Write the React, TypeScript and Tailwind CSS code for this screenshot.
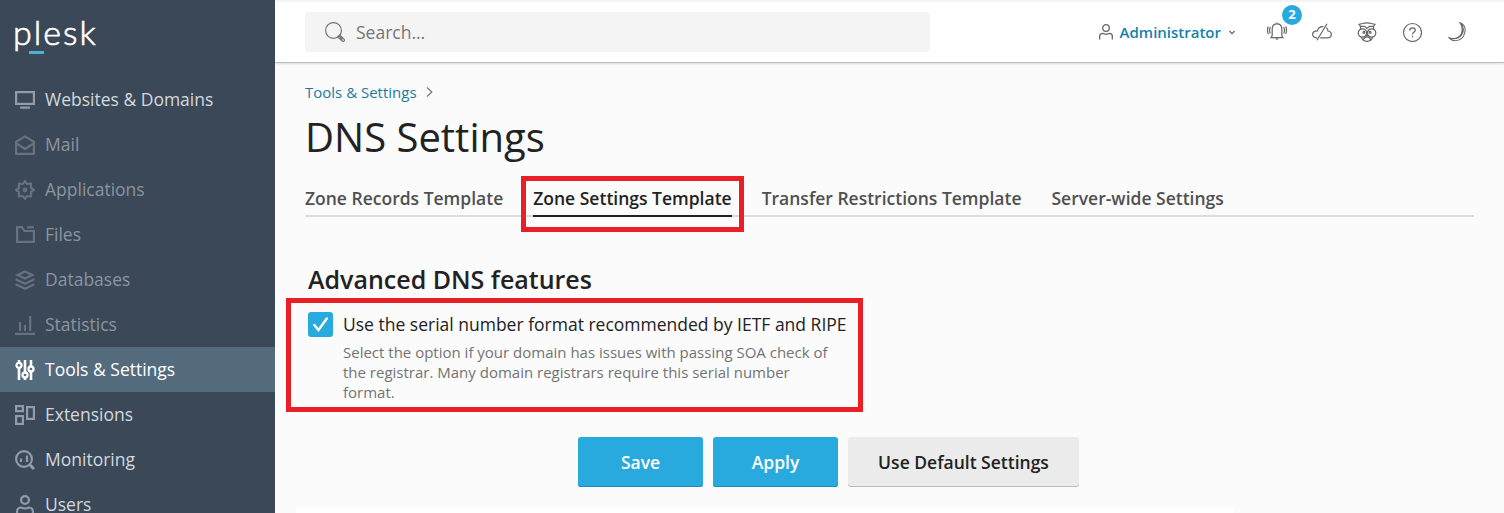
import React from "react";

type IconProps = { children: React.ReactNode; sw?: number; className?: string };

function Icon({ children, sw = 2, className = "size-5" }: IconProps) {
  return (
    <svg viewBox="0 0 20 20" fill="none" stroke="currentColor" strokeWidth={sw} className={className + " block shrink-0"}>
      {children}
    </svg>
  );
}

const icons: Record<string, React.ReactNode> = {
  web: (
    <>
      <rect x="1.100" y="2.100" width="17.800" height="11.800" />
      <path d="M6 17.700H14" strokeLinecap="round" />
    </>
  ),
  mail: (
    <>
      <path d="M1.100 6.800L10 1.400L18.900 6.800V18.900H1.100Z" strokeLinejoin="round" />
      <path d="M1.500 8.500L10 14L18.500 8.500" />
    </>
  ),
  apps: (
    <>
      <path
        strokeLinejoin="round"
        d="M10 1.100L12 4L16 3.500L16 8L18.900 10L16 12L16 16.500L12 16L10 18.900L8 16L4 16.500L4 12L1.100 10L4 8L4 3.500L8 4Z"
      />
      <circle cx="10" cy="10" r="1.300" />
    </>
  ),
  files: (
    <>
      <path d="M2.100 2.100H7L9.500 6H18.900V16.900H2.100Z" />
      <path d="M12 2.300H19" />
    </>
  ),
  db: (
    <>
      <path d="M2.500 5L10 1.400L17.500 5L10 8.600Z" />
      <path d="M.6 9.200L10 13.700L19.400 9.200M.6 14.200L10 18.700L19.400 14.200" />
    </>
  ),
  stats: <path d="M0 18.900H20M5 7V16M10 10V16M15.200 1V16" />,
  tools: (
    <g strokeWidth="2.300">
      <path d="M4 0V3M4 8V20M10 0V12M10 17V20M16 0V7M16 12V20" strokeWidth="2.600" />
      <circle cx="4" cy="5.300" r="2.500" />
      <circle cx="10" cy="15" r="2.500" />
      <circle cx="16" cy="9" r="2.500" />
    </g>
  ),
  ext: (
    <>
      <rect x="1.100" y="1.100" width="6.800" height="5" />
      <rect x="1.100" y="11.100" width="6.800" height="7.800" />
      <rect x="12.100" y="2.100" width="6.800" height="11.800" />
    </>
  ),
  mon: (
    <>
      <circle cx="9" cy="9" r="7.900" />
      <path d="M6 8.500V12M12 5.500V12" />
      <path d="M14.800 14.800L19 19" strokeWidth="3" />
    </>
  ),
  users: (
    <>
      <circle cx="10" cy="5" r="3.900" />
      <path d="M2.100 20V17Q2 12.500 6 12.500Q8 13.500 10 13.500Q12 13.500 14 12.500Q18 12.500 17.900 17V20" />
    </>
  ),
};

const nav = [
  { label: "Websites & Domains", icon: "web", state: "normal" },
  { label: "Mail", icon: "mail", state: "dim" },
  { label: "Applications", icon: "apps", state: "dim" },
  { label: "Files", icon: "files", state: "dim" },
  { label: "Databases", icon: "db", state: "dim" },
  { label: "Statistics", icon: "stats", state: "dim" },
  { label: "Tools & Settings", icon: "tools", state: "active" },
  { label: "Extensions", icon: "ext", state: "normal" },
  { label: "Monitoring", icon: "mon", state: "normal" },
  { label: "Users", icon: "users", state: "normal" },
];

const rowClass: Record<string, string> = {
  normal: "text-[#d3d8de]",
  dim: "text-[#8b959f]",
  active: "bg-[#546a7d] text-white",
};
const iconClass: Record<string, string> = {
  normal: "text-[#929ba6]",
  dim: "text-[#667280]",
  active: "text-white",
};

function Sidebar() {
  return (
    <aside className="w-[275px] shrink-0 bg-[#3a4858]">
      <div className="relative h-[77px] pl-[13px] pt-[8px]">
        <span className="font-['Lato'] text-[34px] font-light leading-[48px] tracking-[2px] text-white [-webkit-text-stroke:0.7px_white]">plesk</span>
        <span className="absolute left-[29px] top-[51px] h-[3px] w-[15px] bg-[#4fb0cf]" />
      </div>
      <nav>
        {nav.map((n) => (
          <div key={n.label} className={"flex h-[45px] items-center gap-[10px] pl-[15px] text-[17.500px] " + rowClass[n.state]}>
            <span className={iconClass[n.state]}>
              <Icon sw={2.2}>{icons[n.icon]}</Icon>
            </span>
            <span>{n.label}</span>
          </div>
        ))}
      </nav>
    </aside>
  );
}

function Header() {
  return (
    <header className="flex h-[63px] shrink-0 items-center border-t-2 border-b border-t-[#f4f4f4] border-b-[#bcbfbe] bg-white pl-[30px] pr-[36px] shadow-[0_1px_2px_rgba(0,0,0,0.12)]">
      <div className="flex h-10 w-[625px] items-center gap-[11px] rounded-[4px] bg-[#f4f4f4] pl-[20px] text-[17.500px] text-[#757575]">
        <Icon sw={1.2}>
          <circle cx="8.500" cy="8.500" r="7.900" />
          <path d="M12.700 15L14.800 13L19 17.200Q19.800 18.200 19 19Q18.100 19.800 17.200 19ZM14 14L17.500 17.500" />
        </Icon>
        <span>Search...</span>
      </div>
      <div className="ml-auto flex items-center text-[#666]">
        <svg viewBox="0 0 14 16" fill="none" stroke="currentColor" strokeWidth="1.300" className="h-4 w-[14px]">
          <circle cx="7" cy="4" r="3.300" />
          <path d="M.7 15.500V12Q.7 9.500 3.500 9.300L7 10.300L10.500 9.300Q13.300 9.500 13.300 12V15.500" />
        </svg>
        <span className="ml-[7px] text-[15px] font-semibold text-[#1681ab]">Administrator</span>
        <svg viewBox="0 0 6 5" fill="none" stroke="currentColor" strokeWidth="1.200" className="ml-[8px] h-[5px] w-[6px]">
          <path d="M.4 1L3 3.700L5.600 1" />
        </svg>
        <span className="relative ml-[32px]">
          <Icon sw={1.2}>
            <path d="M4 15.600H16L14.800 13.500V7Q14.800 1.900 10 1.900Q5.200 1.900 5.200 7V13.500ZM8.800 16.500Q10 18 11.200 16.500M10 .6V2M3.300 5Q1.800 8.200 3.300 11.500M1.300 4.500Q-.3 8 1.300 12M16.700 5Q18.200 8.200 16.700 11.500M18.700 4.500Q20.300 8 18.700 12" />
          </Icon>
          <span className="absolute left-[15px] top-[-17px] flex size-5 items-center justify-center rounded-full bg-[#28aade] text-[13px] font-bold text-white">2</span>
        </span>
        <Icon sw={1.2} className="ml-[25px] size-5">
          <path d="M8.200 15.800H15.800Q19.400 15.500 19.400 12.200Q19.200 9.400 16 9Q15.800 6.800 14.200 5.600M11.500 4.600Q6.500 4.200 5.500 8.800Q.8 8.900 .6 12.300Q.8 15.800 4.500 15.800H5.200M15 1.800L5 18.300" />
        </Icon>
        <Icon sw={1.2} className="ml-[25px] size-5">
          <circle cx="5.400" cy="11" r="4.200" />
          <circle cx="14.600" cy="11" r="4.200" />
          <circle cx="6.900" cy="10.300" r="1" />
          <circle cx="13.100" cy="10.300" r="1" />
          <path d="M3.500 7V4.500L2 2.300L5.500 1.500Q10 .2 14.500 1.500L18 2.300L16.500 4.500V7M3.500 4.300H7.500L10 6.500L12.500 4.300H16.500M8.800 12.500L10 14L11.200 12.500M4.300 15.200Q5.500 19.300 10 19.300Q14.500 19.300 15.700 15.200M6.500 17.500Q7.500 14.800 10 14.800Q12.500 14.800 13.500 17.500" />
        </Icon>
        <Icon sw={1.2} className="ml-[25px] size-5">
          <circle cx="10.500" cy="10.500" r="9" />
          <path d="M7.700 8.500Q7.700 5.800 10.500 5.800Q13.300 5.800 13.300 8.300Q13.300 9.500 11.800 10.300Q10.500 11.100 10.500 12.500M10.500 13.800V15.200" />
        </Icon>
        <Icon sw={1.1} className="ml-[26px] size-5">
          <path d="M12 .8Q18.300 3.300 16.900 10Q15.200 18.700 6.700 18.700Q3 18.700 1 15.800Q4 17.200 7.800 16.200Q13.900 14.500 14.200 8Q14.300 4 12 .8ZM1.500 16.200Q9.500 18.400 13.600 12.700Q17.500 7 13 1.500" />
        </Icon>
      </div>
    </header>
  );
}

const tabs = ["Zone Records Template", "Zone Settings Template", "Transfer Restrictions Template", "Server-wide Settings"];

export default function App() {
  return (
    <div className="flex h-[513px] w-[1504px] overflow-hidden bg-[#fbfbfb] font-['Open_Sans',sans-serif] text-[#222]">
      <Sidebar />
      <main className="flex min-w-0 flex-1 flex-col">
        <Header />
        <div className="flex flex-col pl-[30px] pr-[30px]">
          <div className="mt-[17px] flex h-[24px] items-center text-[15px] text-[#1c7aa0]">
            <span>Tools &amp; Settings</span>
            <svg viewBox="0 0 7 10" fill="none" stroke="#777" strokeWidth="1.200" className="ml-[9px] h-[10px] w-[7px]">
              <path d="M1 .5L5.800 5L1 9.500" />
            </svg>
          </div>
          <h1 className="mt-[8px] text-[40px] leading-[50px]">DNS Settings</h1>
          <div className="mt-[21px] flex h-[34px] gap-[30px] border-b-2 border-[#dcdcdc] text-[17.500px] font-semibold text-[#505050]">
            {tabs.map((t, i) => (
              <div key={t} className={i === 1 ? "relative h-[34px] border-b-2 border-[#222] leading-[31px] text-[#222]" : "h-[34px] leading-[31px]"}>
                {t}
                {i === 1 && <span className="absolute left-[-12px] top-[-7px] h-[56px] w-[223px] border-5 border-[#e81f27]" />}
              </div>
            ))}
          </div>
          <h2 className="ml-[3px] mt-[44px] text-[25px] font-semibold leading-[36px]">Advanced DNS features</h2>
          <div className="relative ml-[3px] mt-[14px] flex w-[540px] gap-[10px]">
            <span className="absolute left-[-22px] top-[-13px] h-[114px] w-[577px] border-5 border-[#e81f27]" />
            <span className="mt-px flex size-[25px] shrink-0 items-center justify-center rounded-[3px] bg-[#28aade]">
              <svg viewBox="0 0 16 16" fill="none" stroke="white" strokeWidth="2.400" strokeLinecap="round" className="size-4">
                <path d="M1.300 8L5.500 13L13.800 1.500" />
              </svg>
            </span>
            <div>
              <div className="pt-px text-[17.500px] leading-[25px]">Use the serial number format recommended by IETF and RIPE</div>
              <p className="mt-[5px] w-[500px] text-[15px] leading-[20px] text-[#737373]">
                Select the option if your domain has issues with passing SOA check of
                <br />
                the registrar. Many domain registrars require this serial number
                <br />
                format.
              </p>
            </div>
          </div>
          <div className="ml-[273px] mt-[35px] flex gap-[10px] text-[17.500px] font-semibold">
            <button className="h-[50px] w-[125px] rounded-[3px] bg-[#28aade] text-white shadow-[inset_0_-1px_0_#2088b2]">Save</button>
            <button className="h-[50px] w-[125px] rounded-[3px] bg-[#28aade] text-white shadow-[inset_0_-1px_0_#2088b2]">Apply</button>
            <button className="h-[50px] w-[231px] rounded-[3px] bg-[#ebebeb] shadow-[inset_0_-1px_0_#bcbcbc]">Use Default Settings</button>
          </div>
          <div className="ml-[-9px] mt-[21px] h-[5px] w-[938px] bg-white" />
        </div>
      </main>
    </div>
  );
}
